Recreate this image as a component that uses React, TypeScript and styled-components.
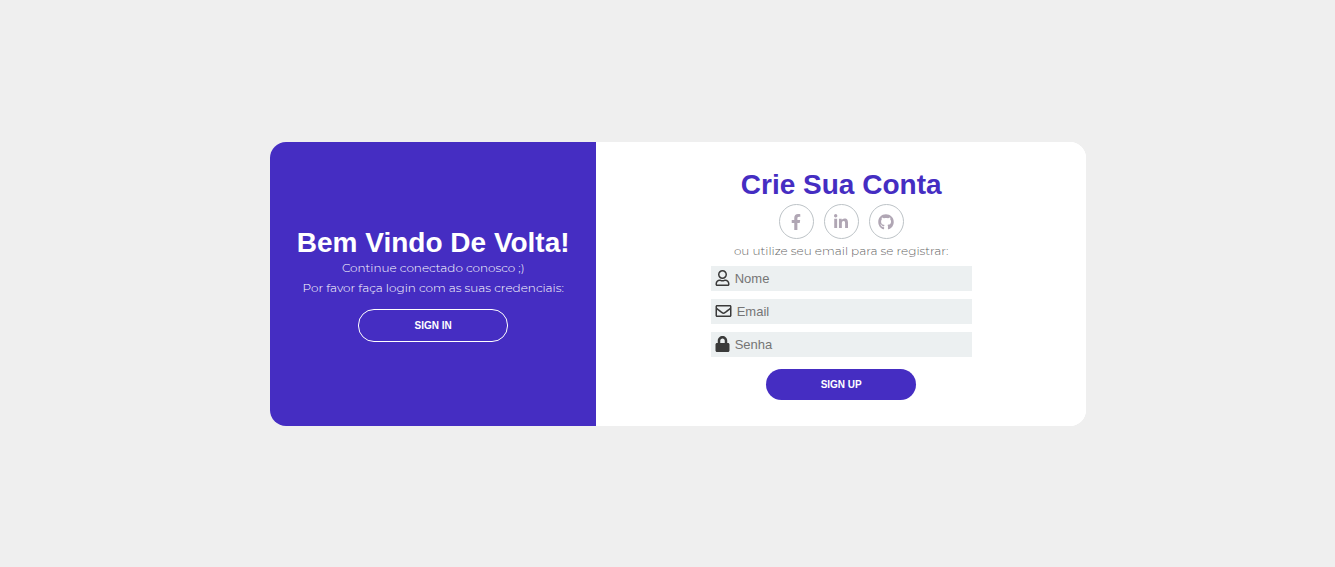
import React from "react";
import styled, { createGlobalStyle } from "styled-components";
import {
  FaFacebookF,
  FaLinkedinIn,
  FaGithub,
  FaRegUser,
  FaRegEnvelope,
  FaLock,
} from "react-icons/fa";

const purple = "#452dc2";
const sans = `"Liberation Sans", Arial, sans-serif`;

const GlobalStyle = createGlobalStyle`
  *, *::before, *::after { box-sizing: border-box; margin: 0; padding: 0; }
  body { background: #efefef; font-family: ${sans}; }
`;

const Page = styled.main`
  min-height: 100vh;
  display: flex;
  align-items: center;
  justify-content: center;
  padding-left: 21px;
`;

const Card = styled.div`
  display: flex;
  width: 100%;
  max-width: 816px;
  border-radius: 16px;
  overflow: hidden;
  background: #ffffff;
`;

const Panel = styled.section<{ $share: number; $filled?: boolean }>`
  flex: ${(p) => p.$share} 1 0;
  display: flex;
  flex-direction: column;
  align-items: center;
  justify-content: center;
  padding: 26px 0;
  text-align: center;
  color: ${(p) => (p.$filled ? "#ffffff" : purple)};
  background: ${(p) => (p.$filled ? purple : "#ffffff")};
`;

const Title = styled.h1`
  padding-top: 2px;
  font-size: 28px;
  line-height: 30px;
  font-weight: 700;
`;

const Text = styled.p<{ $muted?: boolean }>`
  font-family: Montserrat, "Open Sans", sans-serif;
  font-size: 12px;
  font-weight: 300;
  line-height: ${(p) => (p.$muted ? 24 : 20)}px;
  color: ${(p) => (p.$muted ? "#666666" : "#ffffff")};
`;

const Button = styled.button<{ $outlined?: boolean }>`
  width: 150px;
  margin-top: ${(p) => (p.$outlined ? 11 : 12)}px;
  padding: 10px 0;
  border: ${(p) => (p.$outlined ? "1px solid #ffffff" : "none")};
  border-radius: 16px;
  background: ${purple};
  color: #ffffff;
  font-family: ${sans};
  font-size: 10px;
  line-height: 11px;
  font-weight: 700;
  text-transform: uppercase;
  cursor: pointer;
`;

const SocialList = styled.nav`
  display: flex;
  gap: 10px;
  margin-top: 4px;
`;

const SocialLink = styled.a`
  display: flex;
  align-items: center;
  justify-content: center;
  width: 35px;
  height: 35px;
  padding-top: 1px;
  border: 1px solid #bdc3c7;
  border-radius: 50%;
  color: #b0a6b4;
  font-size: 16px;
`;

const Form = styled.form`
  display: flex;
  flex-direction: column;
  align-items: center;
  width: 100%;
  padding: 3px 20px 0;
`;

const Fields = styled.div`
  display: flex;
  flex-direction: column;
  gap: 8px;
  width: 100%;
  max-width: 261px;
`;

const Field = styled.label<{ $iconWidth: number }>`
  display: flex;
  align-items: center;
  gap: 5px;
  height: 25px;
  padding: 0 5px 0 4px;
  background: #ecf0f1;
  color: #3a3a3a;

  svg {
    flex: none;
    width: ${(p) => p.$iconWidth}px;
    height: 16px;
  }
`;

const Input = styled.input`
  flex: 1;
  min-width: 0;
  border: none;
  outline: none;
  background: transparent;
  font-family: ${sans};
  font-size: 13px;
  line-height: 15px;
  color: #3a3a3a;

  &::placeholder {
    color: #757575;
    opacity: 1;
  }
`;

export default function App() {
  return (
    <>
      <GlobalStyle />
      <Page>
        <Card>
          <Panel $share={2} $filled>
            <Title>Bem Vindo De Volta!</Title>
            <Text>Continue conectado conosco ;)</Text>
            <Text>Por favor faça login com as suas credenciais:</Text>
            <Button type="button" $outlined>
              Sign in
            </Button>
          </Panel>
          <Panel $share={3}>
            <Title as="h2">Crie Sua Conta</Title>
            <SocialList>
              <SocialLink href="#facebook" aria-label="Facebook">
                <FaFacebookF />
              </SocialLink>
              <SocialLink href="#linkedin" aria-label="LinkedIn">
                <FaLinkedinIn />
              </SocialLink>
              <SocialLink href="#github" aria-label="GitHub">
                <FaGithub />
              </SocialLink>
            </SocialList>
            <Text $muted>ou utilize seu email para se registrar:</Text>
            <Form onSubmit={(e) => e.preventDefault()}>
              <Fields>
                <Field $iconWidth={15}>
                  <FaRegUser />
                  <Input type="text" placeholder="Nome" aria-label="Nome" />
                </Field>
                <Field $iconWidth={17}>
                  <FaRegEnvelope />
                  <Input type="email" placeholder="Email" aria-label="Email" />
                </Field>
                <Field $iconWidth={15}>
                  <FaLock />
                  <Input type="password" placeholder="Senha" aria-label="Senha" />
                </Field>
              </Fields>
              <Button type="submit">Sign up</Button>
            </Form>
          </Panel>
        </Card>
      </Page>
    </>
  );
}
